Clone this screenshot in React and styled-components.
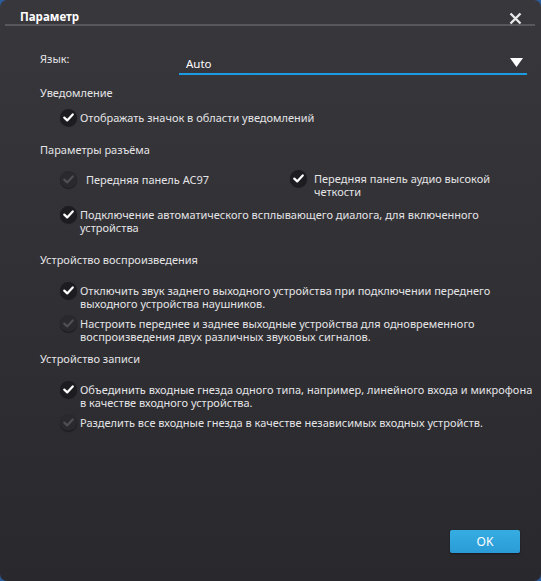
import styled, { createGlobalStyle } from "styled-components"

const Global = createGlobalStyle`
  html, body {
    margin: 0;
    padding: 0;
    background: #2b5c9c;
  }
  * { box-sizing: border-box; }
`

const Window = styled.div`
  width: 541px;
  height: 581px;
  border-radius: 7px;
  overflow: hidden;
  background: linear-gradient(#38373c, #29282d);
  display: flex;
  flex-direction: column;
  font-family: "Noto Sans", "Open Sans", sans-serif;
  font-size: 11px;
  color: #e4e4e6;
`

const TitleBar = styled.div`
  height: 26px;
  margin: 0 6px 0 5px;
  padding: 0 13px 0 15px;
  display: flex;
  align-items: center;
  justify-content: space-between;
  border-bottom: 2px solid #58575c;
`

const Title = styled.div`
  font-weight: bold;
  font-size: 11.5px;
  color: #fff;
  margin-top: 8px;
`

const Close = styled.svg`
  width: 13px;
  height: 13px;
  margin-top: 12px;
`

const Content = styled.div`
  flex: 1;
  padding: 0 0 0 40px;
  display: flex;
  flex-direction: column;
`

const LangRow = styled.div`
  display: flex;
  margin-top: 26px;
  height: 23px;
  line-height: 13px;
`

const LangLabel = styled.div`
  width: 139px;
`

const Select = styled.div`
  width: 348px;
  display: flex;
  justify-content: space-between;
  padding: 5px 4px 0 7px;
  border-bottom: 2px solid #1d9be2;
  color: #fff;
  font-size: 11.5px;
`

const Triangle = styled.svg`
  width: 13px;
  height: 9px;
  margin-top: 1px;
`

const Heading = styled.div`
  line-height: 13px;
  margin-top: ${p => p.$top}px;
`

const Row = styled.div`
  display: flex;
  margin-top: ${p => p.$top}px;
`

const Option = styled.div`
  display: flex;
  align-items: flex-start;
  margin-left: ${p => p.$indent ?? 20}px;
  margin-top: ${p => p.$top ?? 0}px;
  width: ${p => (p.$width ? p.$width + "px" : "auto")};
  line-height: 13px;
  white-space: nowrap;
`

const Check = styled.span`
  flex: none;
  width: 17px;
  height: 17px;
  margin-top: -2px;
  margin-right: ${p => p.$gap}px;
  border-radius: 50%;
  background: ${p => (p.$on ? "#1d1c20" : "#2a292e")};
  box-shadow: 0 1px 1px rgba(0, 0, 0, 0.45);
  display: flex;
  align-items: center;
  justify-content: center;
`

const Footer = styled.div`
  display: flex;
  justify-content: flex-end;
  padding: 0 21px 28px 0;
`

const OkButton = styled.button`
  width: 70px;
  height: 23px;
  border: none;
  border-radius: 2px;
  background: linear-gradient(#36ade2, #2a9bd6);
  color: #fff;
  font-family: "Noto Sans", sans-serif;
  font-size: 12px;
  box-shadow: 0 1px 2px rgba(0, 0, 0, 0.4);
`

function Tick({ on, gap = 3 }) {
  return (
    <Check $on={on} $gap={gap}>
      <svg width="11" height="9" viewBox="0 0 11 9">
        <path
          d="M1.3 4.6 L4.2 7.4 L9.7 1.4"
          fill="none"
          stroke={on ? "#ffffff" : "#4f4e53"}
          strokeWidth="2.2"
          strokeLinecap="round"
          strokeLinejoin="round"
        />
      </svg>
    </Check>
  )
}

export default function App() {
  return (
    <>
      <Global />
      <Window>
        <TitleBar>
          <Title>Параметр</Title>
          <Close viewBox="0 0 13 13">
            <path d="M1.5 1.5 L11.5 11.5 M11.5 1.5 L1.5 11.5" stroke="#e8e8ea" strokeWidth="2.4" />
          </Close>
        </TitleBar>
        <Content>
          <LangRow>
            <LangLabel>Язык:</LangLabel>
            <Select>
              <span>Auto</span>
              <Triangle viewBox="0 0 13 9">
                <path d="M0 0 H13 L6.5 9 Z" fill="#fff" />
              </Triangle>
            </Select>
          </LangRow>

          <Heading $top={11}>Уведомление</Heading>
          <Option $top={12}>
            <Tick on />
            Отображать значок в области уведомлений
          </Option>

          <Heading $top={17}>Параметры разъёма</Heading>
          <Row $top={16}>
            <Option $width={230} $top={1}>
              <Tick on={false} gap={9} />
              Передняя панель AC97
            </Option>
            <Option $indent={0}>
              <Tick on gap={7} />
              <span>
                Передняя панель аудио высокой
                <br />
                четкости
              </span>
            </Option>
          </Row>
          <Option $top={10}>
            <Tick on />
            <span>
              Подключение автоматического всплывающего диалога, для включенного
              <br />
              устройства
            </span>
          </Option>

          <Heading $top={19}>Устройство воспроизведения</Heading>
          <Option $top={18}>
            <Tick on />
            <span>
              Отключить звук заднего выходного устройства при подключении переднего
              <br />
              выходного устройства наушников.
            </span>
          </Option>
          <Option $top={7}>
            <Tick on={false} />
            <span>
              Настроить переднее и заднее выходные устройства для одновременного
              <br />
              воспроизведения двух различных звуковых сигналов.
            </span>
          </Option>

          <Heading $top={9}>Устройство записи</Heading>
          <Option $top={18}>
            <Tick on />
            <span>
              Объединить входные гнезда одного типа, например, линейного входа и микрофона
              <br />
              в качестве входного устройства.
            </span>
          </Option>
          <Option $top={7}>
            <Tick on={false} />
            Разделить все входные гнезда в качестве независимых входных устройств.
          </Option>
        </Content>
        <Footer>
          <OkButton>OK</OkButton>
        </Footer>
      </Window>
    </>
  )
}
